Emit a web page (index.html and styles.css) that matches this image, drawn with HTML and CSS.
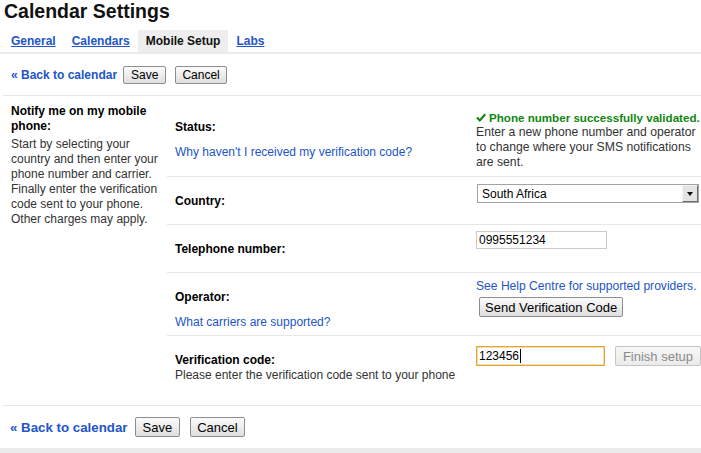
FILE: index.html
```html
<!DOCTYPE html>
<html lang="en">
<head>
<meta charset="utf-8">
<title>Calendar Settings</title>
<link rel="stylesheet" href="styles.css">
</head>
<body>
<h1 class="title">Calendar Settings</h1>
<div class="tabs">
  <div class="tab"><a href="#">General</a></div>
  <div class="tab"><a href="#">Calendars</a></div>
  <div class="tab tab-active">Mobile Setup</div>
  <div class="tab"><a href="#">Labs</a></div>
</div>
<div class="actions">
  <a class="back" href="#">« Back to calendar</a>
  <button class="btn btn-save">Save</button>
  <button class="btn btn-cancel">Cancel</button>
</div>
<div class="main">
  <div class="intro">
    <div class="intro-title">Notify me on my mobile phone:</div>
    <div class="intro-text">Start by selecting your country and then enter your phone number and carrier. Finally enter the verification code sent to your phone. Other charges may apply.</div>
  </div>
  <div class="settings">
    <div class="row row-status">
      <div class="label-cell">
        <div class="label">Status:</div>
        <a class="help-link" href="#">Why haven't I received my verification code?</a>
      </div>
      <div class="value-cell">
        <div class="status-ok">
          <svg class="check" width="10" height="9" viewBox="0 0 10 9"><path d="M1 4.6 L3.8 7.4 L9.2 1.2" fill="none" stroke="#0f870f" stroke-width="2.1"/></svg>
          <span>Phone number successfully validated.</span>
        </div>
        <div class="status-text">Enter a new phone number and operator to change where your SMS notifications are sent.</div>
      </div>
    </div>
    <div class="row row-country">
      <div class="label-cell"><div class="label">Country:</div></div>
      <div class="value-cell">
        <div class="select">
          <span class="select-text">South Africa</span>
          <span class="select-arrow"><span class="tri"></span></span>
        </div>
      </div>
    </div>
    <div class="row row-phone">
      <div class="label-cell"><div class="label">Telephone number:</div></div>
      <div class="value-cell value-tight">
        <div class="field">0995551234</div>
      </div>
    </div>
    <div class="row row-operator">
      <div class="label-cell">
        <div class="label">Operator:</div>
        <a class="help-link" href="#">What carriers are supported?</a>
      </div>
      <div class="value-cell value-tight">
        <a class="providers" href="#">See Help Centre for supported providers.</a>
        <button class="btn btn-send">Send Verification Code</button>
      </div>
    </div>
    <div class="row row-verify">
      <div class="label-cell">
        <div class="label">Verification code:</div>
        <div class="hint">Please enter the verification code sent to your phone</div>
      </div>
      <div class="value-cell value-low">
        <div class="verify-line">
          <div class="field field-focus">123456<span class="caret"></span></div>
          <button class="btn btn-finish" disabled>Finish setup</button>
        </div>
      </div>
    </div>
  </div>
</div>
<div class="actions actions-bottom">
  <a class="back" href="#">« Back to calendar</a>
  <button class="btn btn-save">Save</button>
  <button class="btn btn-cancel">Cancel</button>
</div>
<div class="footer"></div>
</body>
</html>
```
FILE: styles.css
```css
html, body {
  margin: 0;
  padding: 0;
  background: #fff;
  overflow: hidden;
}
body {
  font-family: "Liberation Sans", Arial, sans-serif;
  font-size: 12px;
  color: #000;
  width: 701px;
  height: 453px;
}
a {
  color: #2255c9;
  text-decoration: none;
}
.title {
  margin: 0;
  padding-left: 4px;
  font-size: 19.5px;
  line-height: 22px;
  font-weight: bold;
  color: #111;
}
.tabs {
  margin-top: 8px;
  display: flex;
  padding-left: 3px;
  height: 22px;
  border-bottom: 2px solid #ebebeb;
}
.tab {
  padding: 0 8px;
  line-height: 22px;
  font-size: 12px;
  font-weight: bold;
}
.tab a {
  text-decoration: underline;
}
.tab-active {
  background: #eeeeee;
  color: #111;
}
.actions {
  display: flex;
  align-items: center;
  height: 41px;
  margin-left: 3px;
  padding-left: 8px;
  border-bottom: 1px solid #e6e6e6;
}
.back {
  font-weight: bold;
  font-size: 12px;
}
.btn {
  box-sizing: border-box;
  font-family: "Liberation Sans", Arial, sans-serif;
  font-size: 12px;
  height: 18px;
  padding: 0 6px;
  border: 1px solid #8d8d8d;
  border-radius: 2px;
  background: linear-gradient(#fbfbfb, #dedede);
  color: #000;
  line-height: 1;
}
.actions .btn-save {
  margin-left: 6px;
  padding: 0 7px;
}
.actions .btn-cancel {
  margin-left: 9px;
}
.main {
  display: flex;
  margin-left: 3px;
  border-bottom: 1px solid #e6e6e6;
}
.intro {
  box-sizing: border-box;
  width: 164px;
  padding: 8px 0 0 8px;
}
.intro-title {
  font-weight: bold;
  line-height: 15px;
}
.intro-text {
  margin-top: 3px;
  line-height: 15px;
  color: #333;
}
.settings {
  flex: 1;
  padding-top: 7px;
}
.row {
  display: grid;
  grid-template-columns: 309px 1fr;
  border-bottom: 1px solid #e6e6e6;
}
.row:last-child {
  border-bottom: none;
}
.row-status { height: 73px; }
.row-country { height: 47px; }
.row-phone { height: 47px; }
.row-operator { height: 62px; }
.row-verify { height: 69px; }
.label-cell {
  padding: 16.5px 0 0 8px;
}
.label {
  font-weight: bold;
  line-height: 15px;
}
.help-link {
  display: block;
  margin-top: 10px;
  line-height: 15px;
}
.hint {
  line-height: 15px;
  color: #333;
}
.value-cell {
  padding-top: 7px;
  min-width: 0;
}
.value-tight {
  padding-top: 6px;
}
.value-low {
  padding-top: 10px;
}
.status-ok {
  display: flex;
  align-items: center;
  gap: 3px;
  white-space: nowrap;
  color: #0f870f;
  font-weight: bold;
  font-size: 11.6px;
  line-height: 15px;
}
.check {
  display: block;
}
.status-text {
  line-height: 15px;
  color: #333;
  width: 225px;
  font-size: 12.2px;
}
.select {
  box-sizing: border-box;
  margin-left: 1px;
  width: 222px;
  height: 19px;
  border: 1px solid #a3a3a3;
  display: flex;
  align-items: center;
  justify-content: space-between;
  padding-left: 4px;
  padding-right: 0;
}
.select-arrow {
  box-sizing: border-box;
  width: 16px;
  height: 17px;
  background: #e4e4e4;
  border-top: 1px solid #f4f4f4;
  border-left: 1px solid #f4f4f4;
  border-right: 1px solid #6f6f6f;
  border-bottom: 1px solid #6f6f6f;
  display: flex;
  align-items: center;
  justify-content: center;
}
.tri {
  width: 0;
  height: 0;
  border-left: 3.5px solid transparent;
  border-right: 3.5px solid transparent;
  border-top: 4px solid #000;
  margin-top: 1px;
}
.field {
  box-sizing: border-box;
  width: 131px;
  height: 18px;
  border: 1px solid #cacaca;
  padding-left: 2px;
  line-height: 16px;
  display: flex;
  align-items: center;
}
.field-focus {
  height: 20px;
  border: 1px solid #e2a43c;
  box-shadow: inset 0 0 0 1px #f6dba4;
}
.caret {
  display: inline-block;
  width: 1px;
  height: 14px;
  background: #000;
  margin-left: 1px;
}
.providers {
  display: block;
  white-space: nowrap;
  line-height: 15px;
  font-size: 12.1px;
}
.btn-send {
  display: block;
  margin: 3px 0 0 3px;
  font-size: 13px;
  height: 20px;
  padding: 0 5px;
}
.verify-line {
  display: flex;
  align-items: center;
}
.btn-finish {
  margin-left: 10px;
  font-size: 13px;
  height: 20px;
  padding: 0 7px;
  flex-shrink: 0;
  color: #8a8a8a;
  border-color: #c4c4c4;
  background: linear-gradient(#f7f7f7, #ebebeb);
}
.actions-bottom {
  height: 42px;
  padding-left: 7px;
  border-bottom: none;
}
.actions-bottom .back {
  font-size: 13.3px;
}
.actions-bottom .btn {
  font-size: 13px;
  height: 20px;
}
.actions-bottom .btn-save {
  margin-left: 7px;
  padding: 0 7px;
}
.actions-bottom .btn-cancel {
  margin-left: 10px;
}
.footer {
  height: 20px;
  background: #ececec;
}
```
